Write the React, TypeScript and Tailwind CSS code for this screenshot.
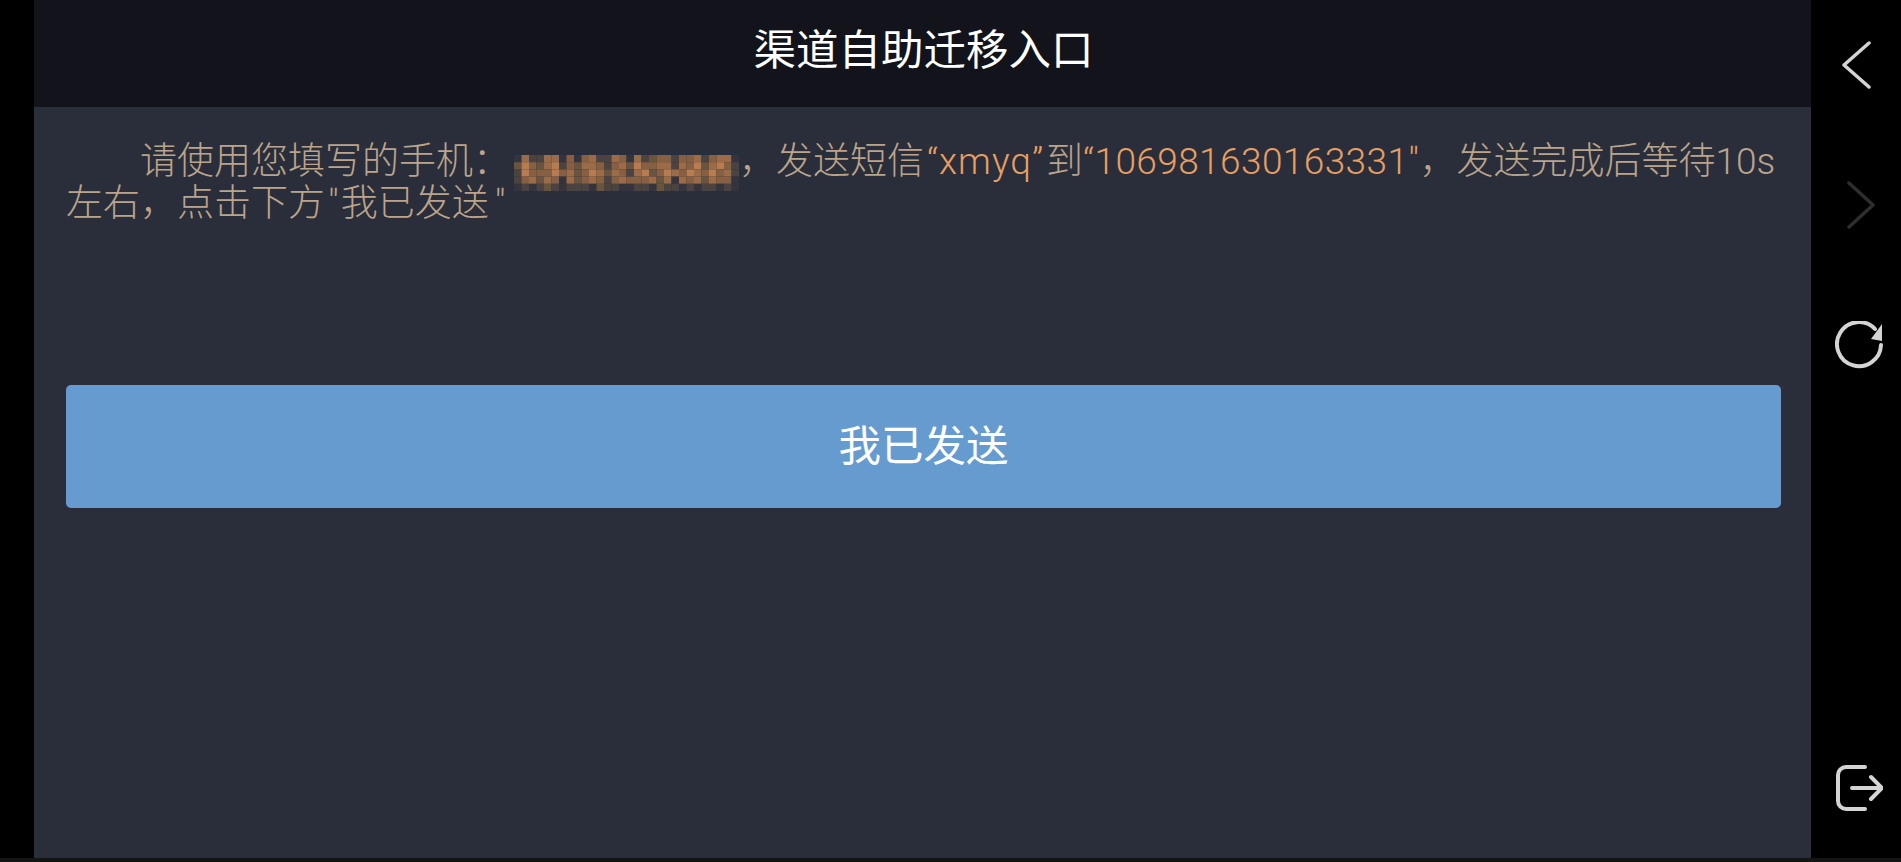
const mosaic = [
  "041144030341143041233133413440",
  "253245132443134253344143524531",
  "153335342354243145235435435341",
  "134243042343134333424043424330",
  "010121011102110011021101011010",
];

const shades = ["#35343c", "#4b433f", "#69543f", "#875f42", "#9c6c48", "#b87c50"];

const PhoneMosaic = () => (
  <svg
    width="225"
    height="36"
    viewBox="0 0 225 36"
    className="inline-block align-[-9px] -my-2 ml-1"
  >
    {mosaic.map((row, y) =>
      row
        .split("")
        .map((level, x) => (
          <rect
            key={`${x}-${y}`}
            x={x * 7.5}
            y={y * 7.2}
            width="7.5"
            height="7.2"
            fill={shades[Number(level)]}
          />
        )),
    )}
  </svg>
);

const Icon = ({ children }: { children: React.ReactNode }) => (
  <svg
    width="48"
    height="48"
    viewBox="0 0 48 48"
    fill="none"
    strokeLinecap="round"
    strokeLinejoin="round"
    className="shrink-0"
  >
    {children}
  </svg>
);

export default function App() {
  return (
    <div
      lang="zh-CN"
      className="w-[1901px] h-[862px] overflow-hidden flex flex-col bg-black font-['Roboto','Noto_Sans_CJK_SC',sans-serif]"
    >
      <div className="flex flex-1 min-h-0">
        <div className="w-[34px] bg-black" />

        {/* Main page */}
        <div className="flex-1 flex flex-col bg-[#2a2e3a]">
          <div className="h-[107px] bg-[#12131b] flex items-center justify-center text-[42.5px] text-white pb-[6px] pl-[2px]">
            渠道自助迁移入口
          </div>

          <div className="pl-[32px] pr-[30px] pt-[34px]">
            <p className="text-[37px] font-light leading-[42px] indent-[74px] text-[#bba48c]">
              请使用您填写的手机：
              <PhoneMosaic />
              ，发送短信
              <span className="text-[#e89f62] pl-[3px] pr-[2px] tracking-[1px]">“xmyq”</span>
              到
              <span className="text-[#e89f62] tracking-[0.4px]">“106981630163331"</span>
              ，发送完成后等待10s 左右，点击下方
              <span className="pl-[3px] pr-[2px]">"</span>
              我已发送
              <span className="pl-[6px]">"</span>
            </p>

            <button className="w-full h-[123px] mt-[160px] bg-[#669bd0] rounded-[5px] text-[42.5px] text-white">
              我已发送
            </button>
          </div>
        </div>

        {/* Side nav */}
        <div className="w-[90px] flex flex-col gap-[92px] pt-[41px] pb-[46px] pl-[24px] bg-black">
          <Icon>
            <path d="M34 2 L9 24 L34 46" stroke="#d4d4d4" strokeWidth="3.5" />
          </Icon>
          <Icon>
            <path d="M14 2 L38 24 L14 46" stroke="#2e2e2e" strokeWidth="3.5" />
          </Icon>
          <Icon>
            <path d="M40 8 A22 22 0 1 0 46 24" stroke="#d4d4d4" strokeWidth="4" />
            <path d="M47 3 L47 20 L36 18 Z" fill="#d4d4d4" />
          </Icon>
          <div className="mt-auto flex">
            <Icon>
              <path
                d="M30 3 H11 A8 8 0 0 0 3 11 V37 A8 8 0 0 0 11 45 H30"
                stroke="#d4d4d4"
                strokeWidth="4"
              />
              <path d="M17 24 H46 M36 13 L47 24 L36 35" stroke="#d4d4d4" strokeWidth="4" />
            </Icon>
          </div>
        </div>
      </div>
      <div className="h-[4px] bg-[#141412]" />
    </div>
  );
}
